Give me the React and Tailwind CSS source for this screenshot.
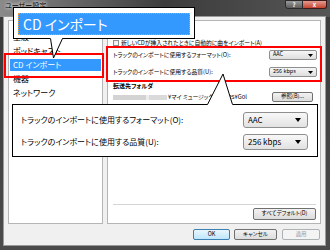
import React from "react";

const Caret = () => (
  <svg width="5" height="3" viewBox="0 0 5 3" className="shrink-0">
    <path d="M0 0H5L2.5 3Z" fill="#000" />
  </svg>
);

const SmallSelect = ({ value }) => (
  <div className="w-[48px] h-[10px] flex items-center justify-between pl-[3px] pr-[3px] border border-[#8e8f8f] rounded-[2px] bg-gradient-to-b from-[#f6f6f6] to-[#dedede] text-[5.5px] leading-none">
    <span>{value}</span>
    <Caret />
  </div>
);

const BigSelect = ({ value }) => (
  <div className="w-[65px] h-[16px] flex items-center justify-between pl-[4px] pr-[6px] border border-[#8e8f8f] rounded-[3px] bg-gradient-to-b from-[#f8f8f8] to-[#e2e2e2] text-[8px] leading-none">
    <span>{value}</span>
    <svg width="6" height="4" viewBox="0 0 6 4">
      <path d="M0 0H6L3 4Z" fill="#000" />
    </svg>
  </div>
);

const Btn = ({ children, className = "" }) => (
  <div
    className={`flex items-center justify-center border border-[#707070] rounded-[2px] bg-gradient-to-b from-[#f2f2f2] to-[#dcdcdc] text-[5.5px] leading-none ${className}`}
  >
    {children}
  </div>
);

export default function App() {
  const items = ["全般", "ポッドキャスト", "CD インポート", "機器", "ネットワーク"];

  return (
    <div className="relative w-[330px] h-[250px] overflow-hidden flex flex-col bg-gradient-to-b from-[#3a3a3a] to-[#4b4b4b] text-black font-['Noto_Sans_CJK_JP',sans-serif] [font-feature-settings:'palt']">
      {/* title bar */}
      <div className="h-[17px] shrink-0 flex items-start pl-[5px] pr-[3px] bg-gradient-to-r from-[#8a8a8a] via-[#3c3c3c] to-[#565656]">
        <span className="mt-[1px] text-[7px] leading-[8px] text-black [text-shadow:0_0_3px_#fff,0_0_5px_#fff]">
          ユーザー設定
        </span>
        <div className="ml-auto flex">
          <div className="w-[18px] h-[9px] flex items-center justify-center border border-[#2a2a2a] rounded-bl-[3px] bg-gradient-to-b from-[#9a9a9a] to-[#5c5c5c] text-[6px] leading-none font-bold text-white">
            ?
          </div>
          <div className="w-[24px] h-[9px] flex items-center justify-center border border-l-0 border-[#3a1a1a] rounded-br-[3px] bg-gradient-to-b from-[#e49a8e] to-[#c2422f] text-[6px] leading-none font-bold text-white">
            x
          </div>
        </div>
      </div>

      {/* client area */}
      <div className="flex-1 min-h-0 ml-[4px] mr-[5px] mb-[5px] bg-[#f0f0f0] flex flex-col shadow-[0_0_0_1px_#9a9a9a]">
        <div className="flex-1 min-h-0 flex gap-[4px] pt-[3px] px-[4px]">
          {/* left list */}
          <div className="w-[95px] bg-white border border-[#b5b5b5] pt-[9px] px-[1px]">
            {items.map((t) => (
              <div key={t} className="h-[14px] py-[1px]">
                <div
                  className={`h-full flex items-center pl-[3px] text-[8px] leading-none ${
                    t === "CD インポート" ? "bg-[#3399ff] text-white" : ""
                  }`}
                >
                  {t}
                </div>
              </div>
            ))}
          </div>

          {/* right pane */}
          <div className="flex-1 bg-white border border-[#b5b5b5] flex flex-col pl-[5px] pr-[3px] pt-[17px] pb-[3px] text-[5.8px] leading-none">
            <div className="h-[10px] flex items-center gap-[2px]">
              <div className="w-[6px] h-[6px] border border-[#8e8f8f] bg-gradient-to-br from-[#e8e8e8] to-white" />
              <span>新しいCDが挿入されたときに自動的に曲をインポート(A)</span>
            </div>
            <div className="mt-[2px] h-[10px] flex items-center justify-between">
              <span>トラックのインポートに使用するフォーマット(O):</span>
              <SmallSelect value="AAC" />
            </div>
            <div className="mt-[7px] h-[10px] flex items-center justify-between">
              <span>トラックのインポートに使用する品質(U):</span>
              <SmallSelect value="256 kbps" />
            </div>
            <div className="mt-[4px] h-[10px] flex items-center font-bold text-[6px]">転送先フォルダ</div>
            <div className="mt-[1px] h-[10px] flex items-center">
              <div className="w-[33px] h-[5px] bg-[#d3d3d3]" />
              <div className="w-[3px] h-[5px] bg-[#ececec]" />
              <div className="w-[18px] h-[5px] bg-[#dadada]" />
              <span className="ml-[1px]">¥マイ ミュージック¥iTunes¥Gol</span>
              <Btn className="ml-auto mr-[4px] w-[41px] h-[10px]">参照(B)...</Btn>
            </div>
            <div className="flex-1" />
            <div className="h-px bg-[#d5d5d5] mr-[1px]" />
            <div className="mt-[3px] flex justify-end pr-[1px]">
              <Btn className="w-[63px] h-[12px]">すべてデフォルト(D)</Btn>
            </div>
          </div>
        </div>

        {/* dialog buttons */}
        <div className="h-[21px] shrink-0 flex justify-end items-start pt-[5px] pr-[5px] gap-[4px] text-[5.5px] leading-none">
          <div className="w-[37px] h-[11px] flex items-center justify-center border border-[#3c7fb1] rounded-[2px] bg-gradient-to-b from-[#eaf6fd] to-[#bee6fd]">
            OK
          </div>
          <Btn className="w-[43px] h-[11px]">キャンセル</Btn>
          <div className="ml-[1px] w-[38px] h-[11px] flex items-center justify-center border border-[#adb2b5] rounded-[2px] bg-[#f4f4f4] text-[#9a9a9a]">
            適用
          </div>
        </div>
      </div>

      {/* red highlight boxes */}
      <div className="absolute left-[4px] top-[53px] w-[100px] h-[25px] border-2 border-[#ff0000]" />
      <div className="absolute left-[106px] top-[46px] w-[216px] h-[36px] border-2 border-[#ff0000]" />

      {/* callout 1 */}
      <div className="absolute left-[13px] top-[7px] w-[182px] h-[32px] bg-white border border-black p-[4px] pt-[5px]">
        <div className="h-[22px] bg-[#3399ff] border border-dotted border-[#ff9a2e] flex items-center pl-[4px] text-white text-[14px] leading-none">
          CD インポート
        </div>
      </div>

      {/* callout 2 */}
      <div className="absolute left-[12px] top-[104px] w-[306px] h-[53px] bg-white border border-black flex flex-col justify-center gap-[6px] pl-[8px] pr-[9px] text-[8px] leading-none">
        <div className="flex items-center justify-between">
          <span>トラックのインポートに使用するフォーマット(O):</span>
          <BigSelect value="AAC" />
        </div>
        <div className="flex items-center justify-between">
          <span>トラックのインポートに使用する品質(U):</span>
          <BigSelect value="256 kbps" />
        </div>
      </div>

      {/* callout tails */}
      <svg className="absolute left-0 top-0 pointer-events-none" width="330" height="250" viewBox="0 0 330 250">
        <polygon points="50,37 53.5,58 63,37" fill="#fff" />
        <polyline points="50.5,38.5 53.5,58 62.5,38.5" fill="none" stroke="#000" strokeWidth="1" />
        <polygon points="207,105.5 223,74 233,105.5" fill="#fff" />
        <polyline points="207.5,104.5 223,74 232.5,104.5" fill="none" stroke="#000" strokeWidth="1" />
      </svg>
    </div>
  );
}
